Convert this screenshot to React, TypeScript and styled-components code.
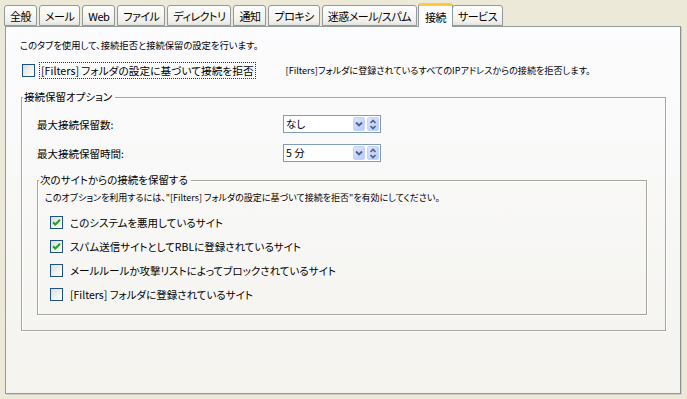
import React from 'react';
import styled, { createGlobalStyle } from 'styled-components';

const GlobalStyle = createGlobalStyle`
  html, body {
    margin: 0;
    padding: 0;
    background: #ece9d8;
  }
  body {
    font-family: "Noto Sans CJK JP", "Noto Sans", sans-serif;
    font-feature-settings: "palt";
    color: #000;
  }
`;

const Window = styled.div`
  width: 687px;
  height: 399px;
  padding: 3px 6px 0 5px;
  box-sizing: border-box;
  font-family: "Noto Sans CJK JP", "Noto Sans", sans-serif;
  font-feature-settings: "palt";
`;

const TabStrip = styled.div`
  display: flex;
  align-items: flex-end;
  height: 23px;
  margin-left: -1px;
  gap: 2px;
  position: relative;
  z-index: 2;
`;

const Tab = styled.div<{ $active?: boolean }>`
  height: ${(p) => (p.$active ? '24px' : '21px')};
  margin-bottom: ${(p) => (p.$active ? '-1px' : '0')};
  padding: 0 ${(p) => (p.$active ? '6px' : '5px')};
  display: flex;
  align-items: center;
  box-sizing: border-box;
  font-size: 11px;
  letter-spacing: -0.5px;
  border: 1px solid #919b9c;
  border-bottom: ${(p) => (p.$active ? 'none' : '1px solid #919b9c')};
  border-top: ${(p) => (p.$active ? '3px solid #ffc83c' : '1px solid #919b9c')};
  border-radius: 3px 3px 0 0;
  background: ${(p) =>
    p.$active ? '#fcfcfe' : 'linear-gradient(#fefefe, #f1f0eb 80%, #e4e3dc)'};
  margin-left: ${(p) => (p.$active ? '-1px' : '0')};
  margin-right: ${(p) => (p.$active ? '-3px' : '0')};
  white-space: nowrap;
`;

const Panel = styled.div`
  width: 676px;
  height: 368px;
  box-sizing: border-box;
  border: 1px solid #919b9c;
  border-right-color: #8c9394;
  box-shadow: 1px 1px 0 #d0cfc4;
  background: linear-gradient(#fcfcfe, #f4f3ee);
  padding: 11px 16px 0 14px;
  display: flex;
  flex-direction: column;
`;

const Intro = styled.div`
  font-size: 9.3px;
  height: 14px;
  line-height: 14px;
`;

const TopRow = styled.div`
  display: flex;
  align-items: center;
  height: 20px;
  margin-top: 8px;
  padding-left: 2px;
`;

const FocusLabel = styled.span`
  font-size: 10.7px;
  outline: 1px dotted #333;
  outline-offset: 0;
  padding: 0 1px;
  margin-left: 5px;
  line-height: 15px;
`;

const Note = styled.span<{ $gap?: number }>`
  font-size: 9.1px;
  margin-left: ${(p) => p.$gap ?? 0}px;
  white-space: nowrap;
`;

const Group = styled.fieldset<{ $w: number; $h: number }>`
  margin: 0;
  width: ${(p) => p.$w}px;
  height: ${(p) => p.$h}px;
  box-sizing: border-box;
  border: 1px solid #a6a69c;
  box-shadow: 1px 1px 0 #fff, inset 1px 1px 0 #fff;
  padding: 0;
  min-width: 0;
`;

const Legend = styled.legend`
  font-size: 10.5px;
  padding: 0 3px 0 1px;
  margin-left: 1px;
  line-height: 16px;
`;

const OuterGroup = styled(Group)`
  margin-top: 9px;
  margin-left: 1px;
`;

const GroupBody = styled.div<{ $top: number; $left: number }>`
  padding: ${(p) => p.$top}px 0 0 ${(p) => p.$left}px;
`;

const FieldRow = styled.div`
  display: flex;
  align-items: center;
  height: 20px;
  margin-bottom: 9px;
`;

const FieldLabel = styled.span`
  font-size: 10.5px;
  width: 246px;
`;

const Combo = styled.div`
  width: 98px;
  height: 18px;
  box-sizing: border-box;
  border: 1px solid #7f9db9;
  background: #fff;
  display: flex;
  align-items: center;
  padding: 1px;
  gap: 2px;
`;

const ComboText = styled.span`
  flex: 1;
  font-size: 10.5px;
  padding-left: 1px;
  line-height: 14px;
`;

const ComboButton = styled.span`
  width: 12px;
  height: 14px;
  box-sizing: border-box;
  border-radius: 2px;
  background: linear-gradient(135deg, #dde6fd, #b6c9f7);
  border: 1px solid #c3d3fd;
  display: flex;
  align-items: center;
  justify-content: center;
`;

const InnerGroup = styled(Group)`
  margin-top: 5px;
`;

const SmallNote = styled.div`
  font-size: 9px;
  height: 14px;
  line-height: 14px;
  margin-top: 3px;
  margin-bottom: 7px;
`;

const CheckRow = styled.div`
  display: flex;
  align-items: center;
  height: 20px;
  margin-bottom: 4.3px;
  padding-left: 5px;
  gap: 7px;
  font-size: 10.5px;
`;

const Box = styled.span`
  width: 13px;
  height: 13px;
  box-sizing: border-box;
  border: 1px solid #1c5180;
  background: linear-gradient(135deg, #dcdcd7, #fbfbf9 85%);
  display: inline-flex;
  align-items: center;
  justify-content: center;
  flex: none;
`;

function Check({ checked }: { checked?: boolean }) {
  return (
    <Box>
      {checked && (
        <svg width="9" height="9" viewBox="0 0 9 9">
          <path d="M1 4.2 L3.3 6.5 L8 1.8" stroke="#21a121" strokeWidth="2" fill="none" />
        </svg>
      )}
    </Box>
  );
}

function Select({ value }: { value: string }) {
  return (
    <Combo>
      <ComboText>{value}</ComboText>
      <ComboButton>
        <svg width="8" height="6" viewBox="0 0 8 6">
          <path d="M1 1.5 L4 4.5 L7 1.5" stroke="#4d6185" strokeWidth="1.8" fill="none" />
        </svg>
      </ComboButton>
      <ComboButton>
        <svg width="8" height="11" viewBox="0 0 8 11">
          <path d="M1.5 4 L4 1.5 L6.5 4 M1.5 7 L4 9.5 L6.5 7" stroke="#4d6185" strokeWidth="1.6" fill="none" />
        </svg>
      </ComboButton>
    </Combo>
  );
}

const tabs = ['全般', 'メール', 'Web', 'ファイル', 'ディレクトリ', '通知', 'プロキシ', '迷惑メール/スパム', '接続', 'サービス'];

const sites = [
  { label: 'このシステムを悪用しているサイト', checked: true },
  { label: 'スパム送信サイトとしてRBLに登録されているサイト', checked: true },
  { label: 'メールルールか攻撃リストによってブロックされているサイト', checked: false },
  { label: '[Filters] フォルダに登録されているサイト', checked: false },
];

export default function App() {
  return (
    <Window>
      <GlobalStyle />
      <TabStrip>
        {tabs.map((t) => (
          <Tab key={t} $active={t === '接続'}>
            {t}
          </Tab>
        ))}
      </TabStrip>
      <Panel>
        <Intro>このタブを使用して、接続拒否と接続保留の設定を行います。</Intro>
        <TopRow>
          <Check />
          <FocusLabel>[Filters] フォルダの設定に基づいて接続を拒否</FocusLabel>
          <Note $gap={31}>[Filters]フォルダに登録されているすべてのIPアドレスからの接続を拒否します。</Note>
        </TopRow>
        <OuterGroup $w={645} $h={242}>
          <Legend>接続保留オプション</Legend>
          <GroupBody $top={9} $left={15}>
            <FieldRow>
              <FieldLabel>最大接続保留数:</FieldLabel>
              <Select value="なし" />
            </FieldRow>
            <FieldRow>
              <FieldLabel>最大接続保留時間:</FieldLabel>
              <Select value="5 分" />
            </FieldRow>
            <InnerGroup $w={610} $h={143}>
              <Legend>次のサイトからの接続を保留する</Legend>
              <GroupBody $top={0} $left={7}>
                <SmallNote>
                  このオプションを利用するには、"[Filters] フォルダの設定に基づいて接続を拒否"を有効にしてください。
                </SmallNote>
                {sites.map((s) => (
                  <CheckRow key={s.label}>
                    <Check checked={s.checked} />
                    <span>{s.label}</span>
                  </CheckRow>
                ))}
              </GroupBody>
            </InnerGroup>
          </GroupBody>
        </OuterGroup>
      </Panel>
    </Window>
  );
}
